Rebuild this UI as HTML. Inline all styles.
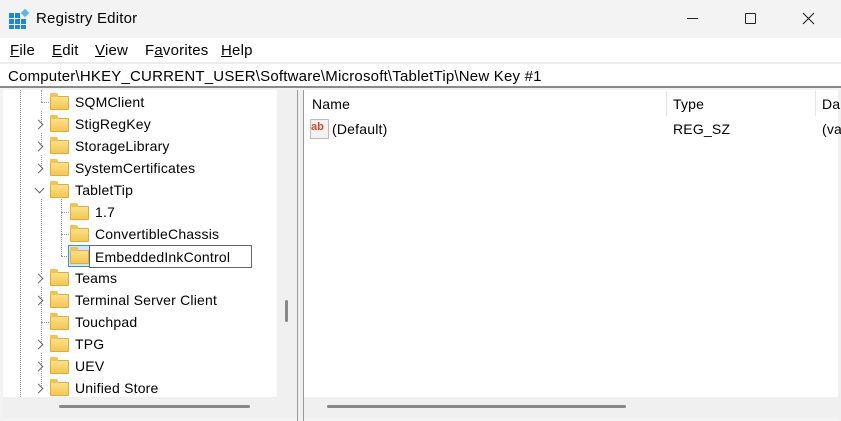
<!DOCTYPE html>
<html><head><meta charset="utf-8"><style>
*{margin:0;padding:0;box-sizing:border-box}
body{width:841px;height:421px;overflow:hidden;background:#f3f3f3;font-family:"Segoe UI","Liberation Sans",sans-serif;font-size:14px;color:#000;position:relative}
.a{position:absolute;white-space:nowrap}
.t{margin-top:1px;letter-spacing:0.2px}
.fold{position:absolute;width:19px;height:14px;background:linear-gradient(#fbe08a,#f4c74e);border:1px solid #dcae3a;border-radius:1px}
.fold:before{content:"";position:absolute;left:-1px;top:-4px;width:8px;height:4px;background:#f0c453;border-radius:1px 2px 0 0}
.chev{position:absolute;width:7px;height:7px;border-right:1.3px solid #666;border-bottom:1.3px solid #666;transform:rotate(-45deg)}
.dv{position:absolute;border-left:1px dotted #999;width:0}
.dh{position:absolute;border-top:1px dotted #999;height:0}
</style></head><body>
<div class="a" style="left:0;top:0;width:841px;height:38px;background:#f3f3f3"></div>
<svg class="a" style="left:9px;top:9px" width="20" height="20"><g fill="#1e88d6"><rect x="0" y="4" width="5" height="5"/><rect x="6" y="4" width="5" height="5"/><rect x="0" y="10" width="5" height="5"/><rect x="6" y="10" width="5" height="5"/><rect x="12" y="10" width="5" height="5"/><rect x="0" y="16" width="5" height="4"/><rect x="6" y="16" width="5" height="4"/><rect x="12" y="16" width="5" height="4"/></g><rect x="13" y="1" width="6" height="6" fill="#5bb4f0" transform="rotate(45 16 4)"/></svg>
<div class="a t" style="left:36px;top:9px;font-size:15px">Registry Editor</div>
<div class="a" style="left:687px;top:18px;width:11px;height:1px;background:#222"></div>
<div class="a" style="left:745px;top:13px;width:11px;height:11px;border:1px solid #222;border-radius:1px"></div>
<svg class="a" style="left:802px;top:12px" width="13" height="13"><path d="M1 1L12 12M12 1L1 12" stroke="#222" stroke-width="1.1"/></svg>
<div class="a" style="left:0;top:38px;width:841px;height:24px;background:#fff"></div>
<div class="a t" style="left:10px;top:41px;font-size:15px"><u>F</u>ile</div>
<div class="a t" style="left:52px;top:41px;font-size:15px"><u>E</u>dit</div>
<div class="a t" style="left:95px;top:41px;font-size:15px"><u>V</u>iew</div>
<div class="a t" style="left:145px;top:41px;font-size:15px">F<u>a</u>vorites</div>
<div class="a t" style="left:221px;top:41px;font-size:15px"><u>H</u>elp</div>
<div class="a" style="left:0;top:62px;width:841px;height:2px;background:#ececec"></div>
<div class="a" style="left:0;top:64px;width:841px;height:24px;background:#fff;border-bottom:2px solid #8a8a8a"></div>
<div class="a t" style="left:8px;top:67px;font-size:15px;letter-spacing:0.2px">Computer\HKEY_CURRENT_USER\Software\Microsoft\TabletTip\New Key #1</div>
<!-- left pane -->
<div class="a" style="left:3px;top:90px;width:294px;height:328px;background:#fff"></div>
<div class="a" style="left:277px;top:90px;width:20px;height:307px;background:#f0f0f0"></div>
<div class="a" style="left:285px;top:300px;width:3px;height:22px;background:#888;border-radius:2px"></div>
<div class="a" style="left:3px;top:397px;width:294px;height:21px;background:#f0f0f0"></div>
<div class="a" style="left:59px;top:405px;width:191px;height:3px;background:#888;border-radius:2px"></div>
<div class="a" style="left:297px;top:90px;width:7px;height:331px;background:#f0f0f0;border-left:1px solid #999;border-right:1px solid #999"></div>
<div class="dv" style="left:20px;top:90px;height:307px"></div>
<div class="dv" style="left:41px;top:90px;height:12px"></div>
<div class="dh" style="left:41px;top:102px;width:8px"></div>
<div class="dv" style="left:41px;top:111px;height:13px"></div>
<div class="dv" style="left:41px;top:133px;height:13px"></div>
<div class="dv" style="left:41px;top:155px;height:13px"></div>
<div class="dv" style="left:41px;top:199px;height:75px"></div>
<div class="dv" style="left:61px;top:199px;height:57px"></div>
<div class="dh" style="left:61px;top:212px;width:8px"></div>
<div class="dh" style="left:61px;top:234px;width:8px"></div>
<div class="dh" style="left:61px;top:256px;width:8px"></div>
<div class="dv" style="left:41px;top:287px;height:57px"></div>
<div class="dh" style="left:41px;top:322px;width:8px"></div>
<div class="dv" style="left:41px;top:353px;height:35px"></div>
<div class="chev" style="left:35px;top:121px"></div>
<div class="chev" style="left:35px;top:143px"></div>
<div class="chev" style="left:35px;top:165px"></div>
<div class="chev" style="left:36px;top:185px;transform:rotate(45deg)"></div>
<div class="chev" style="left:35px;top:275px"></div>
<div class="chev" style="left:35px;top:297px"></div>
<div class="chev" style="left:35px;top:341px"></div>
<div class="chev" style="left:35px;top:363px"></div>
<div class="chev" style="left:35px;top:385px"></div>
<div class="fold" style="left:50px;top:96px"></div><div class="a t" style="left:75px;top:93px">SQMClient</div>
<div class="fold" style="left:50px;top:118px"></div><div class="a t" style="left:75px;top:115px">StigRegKey</div>
<div class="fold" style="left:50px;top:140px"></div><div class="a t" style="left:75px;top:137px">StorageLibrary</div>
<div class="fold" style="left:50px;top:162px"></div><div class="a t" style="left:75px;top:159px">SystemCertificates</div>
<div class="fold" style="left:50px;top:184px"></div><div class="a t" style="left:75px;top:181px">TabletTip</div>
<div class="fold" style="left:70px;top:206px"></div><div class="a t" style="left:95px;top:203px">1.7</div>
<div class="fold" style="left:70px;top:228px"></div><div class="a t" style="left:95px;top:225px">ConvertibleChassis</div>
<div class="a" style="left:68px;top:245px;width:24px;height:22px;background:#cce8ff;border:1px solid #3d8ee0"></div>
<div class="fold" style="left:70px;top:250px"></div>
<div class="a" style="left:89px;top:245px;width:163px;height:23px;background:#fff;border:1px solid #666;padding:3px 0 0 5px;letter-spacing:0.2px">EmbeddedInkControl</div>
<div class="fold" style="left:50px;top:272px"></div><div class="a t" style="left:75px;top:269px">Teams</div>
<div class="fold" style="left:50px;top:294px"></div><div class="a t" style="left:75px;top:291px">Terminal Server Client</div>
<div class="fold" style="left:50px;top:316px"></div><div class="a t" style="left:75px;top:313px">Touchpad</div>
<div class="fold" style="left:50px;top:338px"></div><div class="a t" style="left:75px;top:335px">TPG</div>
<div class="fold" style="left:50px;top:360px"></div><div class="a t" style="left:75px;top:357px">UEV</div>
<div class="fold" style="left:50px;top:382px"></div><div class="a t" style="left:75px;top:379px">Unified Store</div>
<!-- right pane -->
<div class="a" style="left:304px;top:90px;width:534px;height:307px;background:#fff"></div>
<div class="a" style="left:304px;top:397px;width:534px;height:21px;background:#f0f0f0"></div>
<div class="a" style="left:327px;top:405px;width:299px;height:3px;background:#888;border-radius:2px"></div>
<div class="a" style="left:838px;top:90px;width:3px;height:331px;background:#f0f0f0"></div>
<div class="a" style="left:666px;top:91px;width:1px;height:25px;background:#e5e5e5"></div>
<div class="a" style="left:815px;top:91px;width:1px;height:25px;background:#e5e5e5"></div>
<div class="a t" style="left:312px;top:95px">Name</div>
<div class="a t" style="left:673px;top:95px">Type</div>
<div class="a t" style="left:822px;top:95px">Da</div>
<div class="a" style="left:310px;top:119px;width:19px;height:20px;background:#f2f2f2;border:1px solid #bbb;border-radius:1px"></div>
<div class="a" style="left:311px;top:121px;font-size:11px;font-weight:bold;color:#d04a2a;font-family:'Liberation Sans',sans-serif">ab</div>
<div class="a t" style="left:332px;top:120px">(Default)</div>
<div class="a t" style="left:673px;top:120px">REG_SZ</div>
<div class="a t" style="left:822px;top:120px">(va</div>
</body></html>
